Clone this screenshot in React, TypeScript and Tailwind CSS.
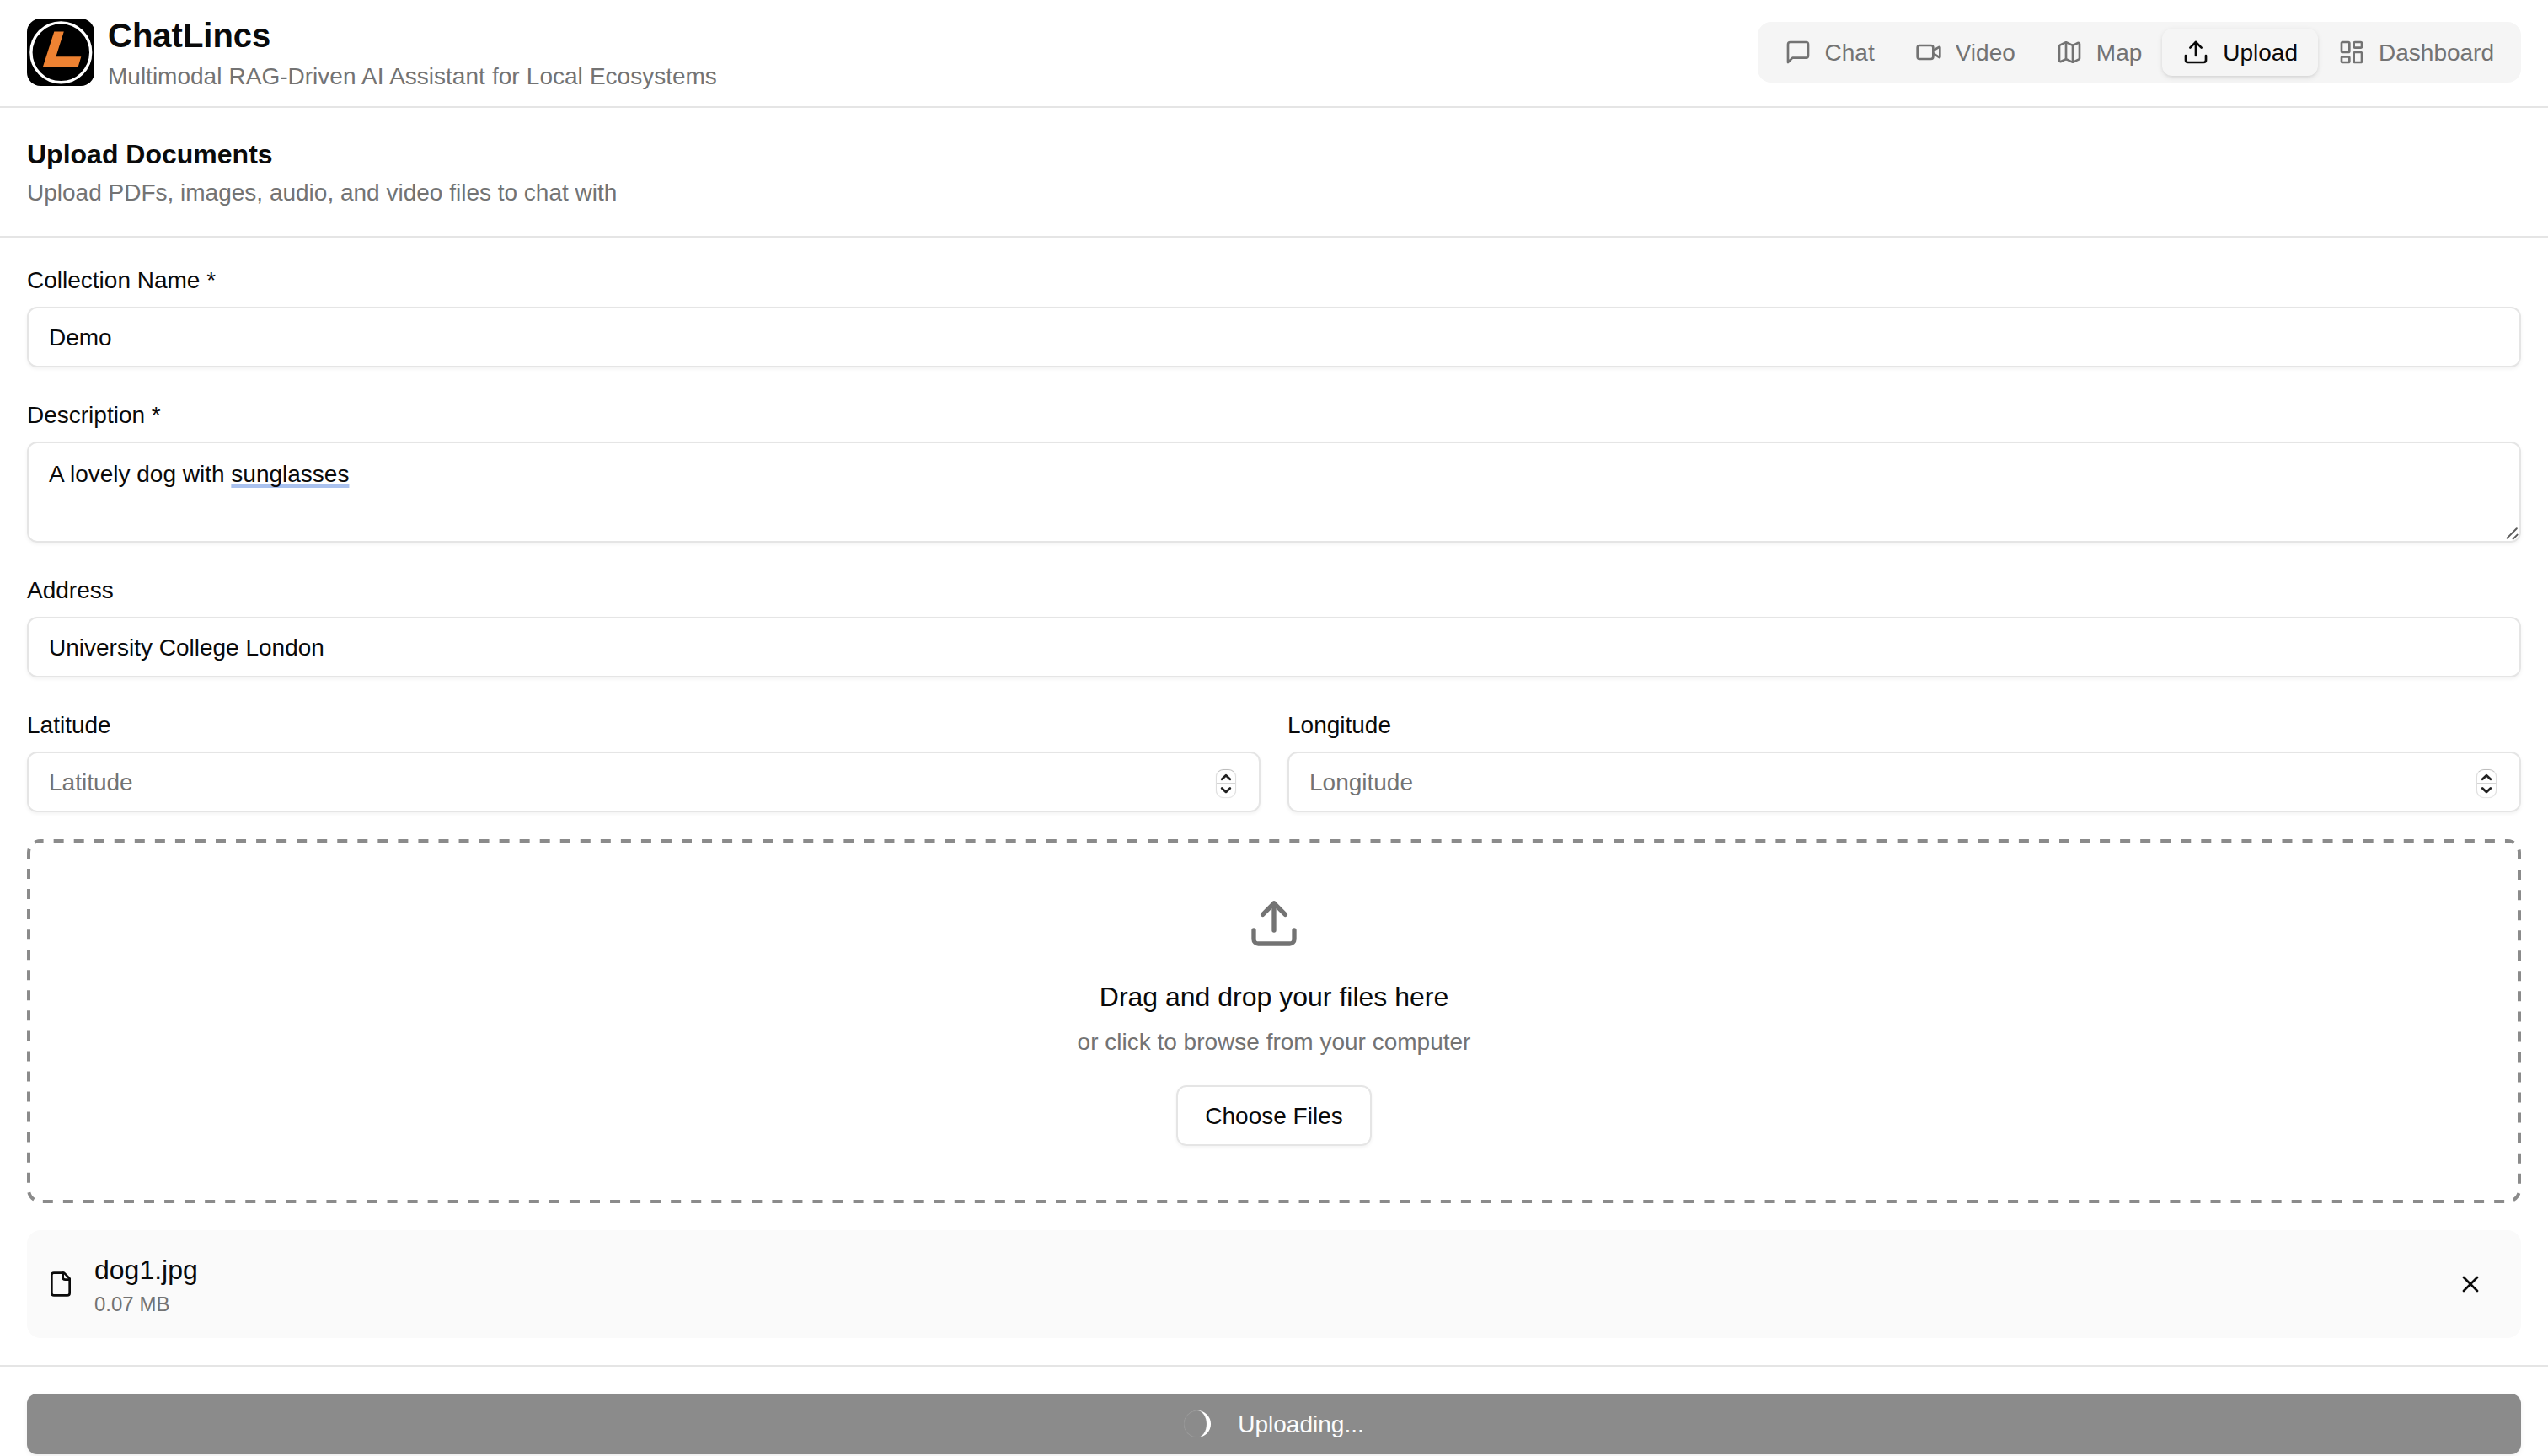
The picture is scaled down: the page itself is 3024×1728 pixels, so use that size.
import { LayoutDashboard, Map, Upload, Video, X } from "lucide-react";
import { useState } from "react";

const MessageSquare = ({ className }: { className?: string }) => (
  <svg
    viewBox="0 0 24 24"
    fill="none"
    stroke="currentColor"
    strokeWidth={2}
    strokeLinecap="round"
    strokeLinejoin="round"
    className={className}
  >
    <path d="M21 15a2 2 0 0 1-2 2H7l-4 4V5a2 2 0 0 1 2-2h14a2 2 0 0 1 2 2z" />
  </svg>
);

const FileIcon = ({ className }: { className?: string }) => (
  <svg
    viewBox="0 0 24 24"
    fill="none"
    stroke="currentColor"
    strokeWidth={2}
    strokeLinecap="round"
    strokeLinejoin="round"
    className={className}
  >
    <path d="M15 2H6a2 2 0 0 0-2 2v16a2 2 0 0 0 2 2h12a2 2 0 0 0 2-2V7Z" />
    <path d="M14 2v4a2 2 0 0 0 2 2h4" />
  </svg>
);

const Logo = () => (
  <svg viewBox="0 0 80 80" className="size-20 shrink-0">
    <rect width="80" height="80" rx="16" fill="#000" />
    <circle cx="40.3" cy="40.3" r="35.4" fill="none" stroke="#fff" strokeWidth="3.4" />
    <path d="M32.3 15.6H43.8L34.4 45.3H64.3L60.8 57H19Z" fill="#ee8232" />
  </svg>
);

const tabs = [
  { id: "chat", label: "Chat", icon: MessageSquare },
  { id: "video", label: "Video", icon: Video },
  { id: "map", label: "Map", icon: Map },
  { id: "upload", label: "Upload", icon: Upload },
  { id: "dashboard", label: "Dashboard", icon: LayoutDashboard },
];

const files = [{ name: "dog1.jpg", size: 0.07 }];

const boxClass =
  "w-full rounded-xl border-2 border-[#e5e5e5] px-6 text-[28px] leading-10 shadow-[0_2px_4px_rgba(0,0,0,0.05)] outline-none placeholder:text-[#737373]";

const Label = ({ children }: { children: any }) => (
  <label className="mb-2.5 block text-[28px] leading-[42px]">{children}</label>
);

// up / down arrows of the number fields
const Stepper = () => (
  <div className="absolute top-[21px] right-[29px] flex h-[34px] w-6 flex-col rounded-[9px] border border-[#dedede] border-t-[#bdbdbd] border-b-[#e8e8e8] bg-white shadow-[0_0_1px_rgba(0,0,0,0.15)]">
    <svg viewBox="0 0 22 32" className="h-full w-full">
      <path d="M0 16H22" stroke="#d4d4d4" strokeWidth="2" />
      <path
        d="M6.2 10.8L11 6.3L15.8 10.8M6.2 21.4L11 25.9L15.8 21.4"
        fill="none"
        stroke="#222"
        strokeWidth="2.8"
        strokeLinecap="round"
        strokeLinejoin="round"
      />
    </svg>
  </div>
);

// long dashes, the inner half of the stroke is what shows
const DashedBorder = () => (
  <svg
    viewBox="0 0 2960 432"
    className="pointer-events-none absolute inset-0 h-full w-full overflow-hidden rounded-2xl"
  >
    <rect
      width="2960"
      height="432"
      rx="16"
      fill="none"
      stroke="#8b8b8b"
      strokeWidth="8"
      strokeDasharray="12 12.044"
      strokeDashoffset="8.4"
    />
  </svg>
);

export default function App() {
  const [activeTab, setActiveTab] = useState("upload");
  const [name, setName] = useState("Demo");
  const [address, setAddress] = useState("University College London");

  return (
    <div className="flex h-[1728px] w-full flex-col overflow-hidden bg-white font-['Liberation_Sans',Arial,sans-serif] text-[#0a0a0a]">
      <header className="flex h-32 shrink-0 items-center justify-between border-b-2 border-[#e5e5e5] px-8 pb-0.5">
        <div className="flex items-center gap-4">
          <Logo />
          <div>
            <h1 className="text-[40px] leading-14 font-bold">ChatLincs</h1>
            <p className="-mb-0.5 text-[28px] leading-[42px] [word-spacing:0.4px] text-[#737373]">
              Multimodal RAG-Driven AI Assistant for Local Ecosystems
            </p>
          </div>
        </div>
        <nav className="flex h-18 items-center rounded-2xl bg-[#f5f5f5] p-2">
          {tabs.map((tab) => (
            <button
              key={tab.id}
              onClick={() => setActiveTab(tab.id)}
              className={`flex h-14 items-center gap-4 rounded-xl px-6 text-[28px] leading-10 ${
                activeTab === tab.id
                  ? "bg-[#f5f5f5] text-[#0a0a0a] shadow-[0_2px_6px_rgba(0,0,0,0.1),0_2px_4px_-2px_rgba(0,0,0,0.1)]"
                  : "text-[#737373]"
              }`}
            >
              <tab.icon className="size-8" />
              <span className="pt-0.5">{tab.label}</span>
            </button>
          ))}
        </nav>
      </header>

      <div className="h-[154px] shrink-0 border-b-2 border-[#e5e5e5] p-8">
        <h2 className="mb-0.5 text-[32px] leading-[46px] font-bold">Upload Documents</h2>
        <p className="text-[28px] leading-[42px] text-[#737373]">
          Upload PDFs, images, audio, and video files to chat with
        </p>
      </div>

      <main className="flex shrink-0 flex-col px-8 pt-[30px] pb-8">
        <div className="mb-9">
          <Label>Collection Name *</Label>
          <input
            className={`block h-18 pt-0.5 ${boxClass}`}
            value={name}
            onChange={(e) => setName(e.target.value)}
          />
        </div>
        <div className="mb-9">
          <Label>Description *</Label>
          <div className={`relative h-30 pt-[17px] ${boxClass}`}>
            A lovely dog with{" "}
            <span className="underline decoration-[#a9c1ee] decoration-4 underline-offset-[3px] [text-decoration-skip-ink:none]">
              sunglasses
            </span>
            <svg viewBox="0 0 16 16" className="absolute right-px bottom-px size-4">
              <path
                d="M2.5 13.6L13.8 2.2M9.6 14.6L14.6 9.6"
                stroke="#5c5c5c"
                strokeWidth="2"
                strokeLinecap="round"
              />
            </svg>
          </div>
        </div>
        <div className="mb-9">
          <Label>Address</Label>
          <input
            className={`block h-18 pt-0.5 ${boxClass}`}
            value={address}
            onChange={(e) => setAddress(e.target.value)}
          />
        </div>
        <div className="mb-8 grid grid-cols-2 gap-8">
          <div>
            <Label>Latitude</Label>
            <div className="relative">
              <input className={`block h-18 pt-0.5 ${boxClass}`} placeholder="Latitude" />
              <Stepper />
            </div>
          </div>
          <div>
            <Label>Longitude</Label>
            <div className="relative">
              <input className={`block h-18 pt-0.5 ${boxClass}`} placeholder="Longitude" />
              <Stepper />
            </div>
          </div>
        </div>

        <div className="relative flex h-108 flex-col items-center p-17">
          <DashedBorder />
          <Upload className="mb-8 size-16 shrink-0 text-[#737373]" />
          <p className="mb-2.5 text-[32px] leading-[46px]">Drag and drop your files here</p>
          <p className="mb-[30px] text-[28px] leading-[42px] text-[#737373]">
            or click to browse from your computer
          </p>
          <button className="h-18 shrink-0 rounded-xl border-2 border-[#e5e5e5] px-8 pt-0.5 text-[28px] leading-10 shadow-[0_2px_4px_rgba(0,0,0,0.05)]">
            Choose Files
          </button>
        </div>

        {files.map((file) => (
          <div
            key={file.name}
            className="mt-8 flex items-center justify-between rounded-2xl bg-[#fafafa] p-6"
          >
            <div className="flex items-center gap-6">
              <FileIcon className="size-8" />
              <div>
                <p className="mb-0.5 text-[32px] leading-[46px]">{file.name}</p>
                <p className="text-[24px] leading-8 text-[#737373]">{file.size} MB</p>
              </div>
            </div>
            <button className="flex size-18 items-center justify-center">
              <X className="size-8" />
            </button>
          </div>
        ))}
      </main>

      <footer className="shrink-0 border-t-2 border-[#e5e5e5] px-8 pt-8">
        <button className="flex h-18 w-full items-center justify-center gap-8 rounded-xl bg-[#8b8b8b] text-[28px] leading-10 text-[#fcfcfc] shadow-[0_2px_6px_rgba(0,0,0,0.05),0_2px_4px_-2px_rgba(0,0,0,0.05)]">
          <span className="size-8 rounded-full border-r-[5px] border-white shadow-[inset_0_0_1px_rgba(255,255,255,0.5)]" />
          <span className="pt-0.5">Uploading...</span>
        </button>
      </footer>
    </div>
  );
}
